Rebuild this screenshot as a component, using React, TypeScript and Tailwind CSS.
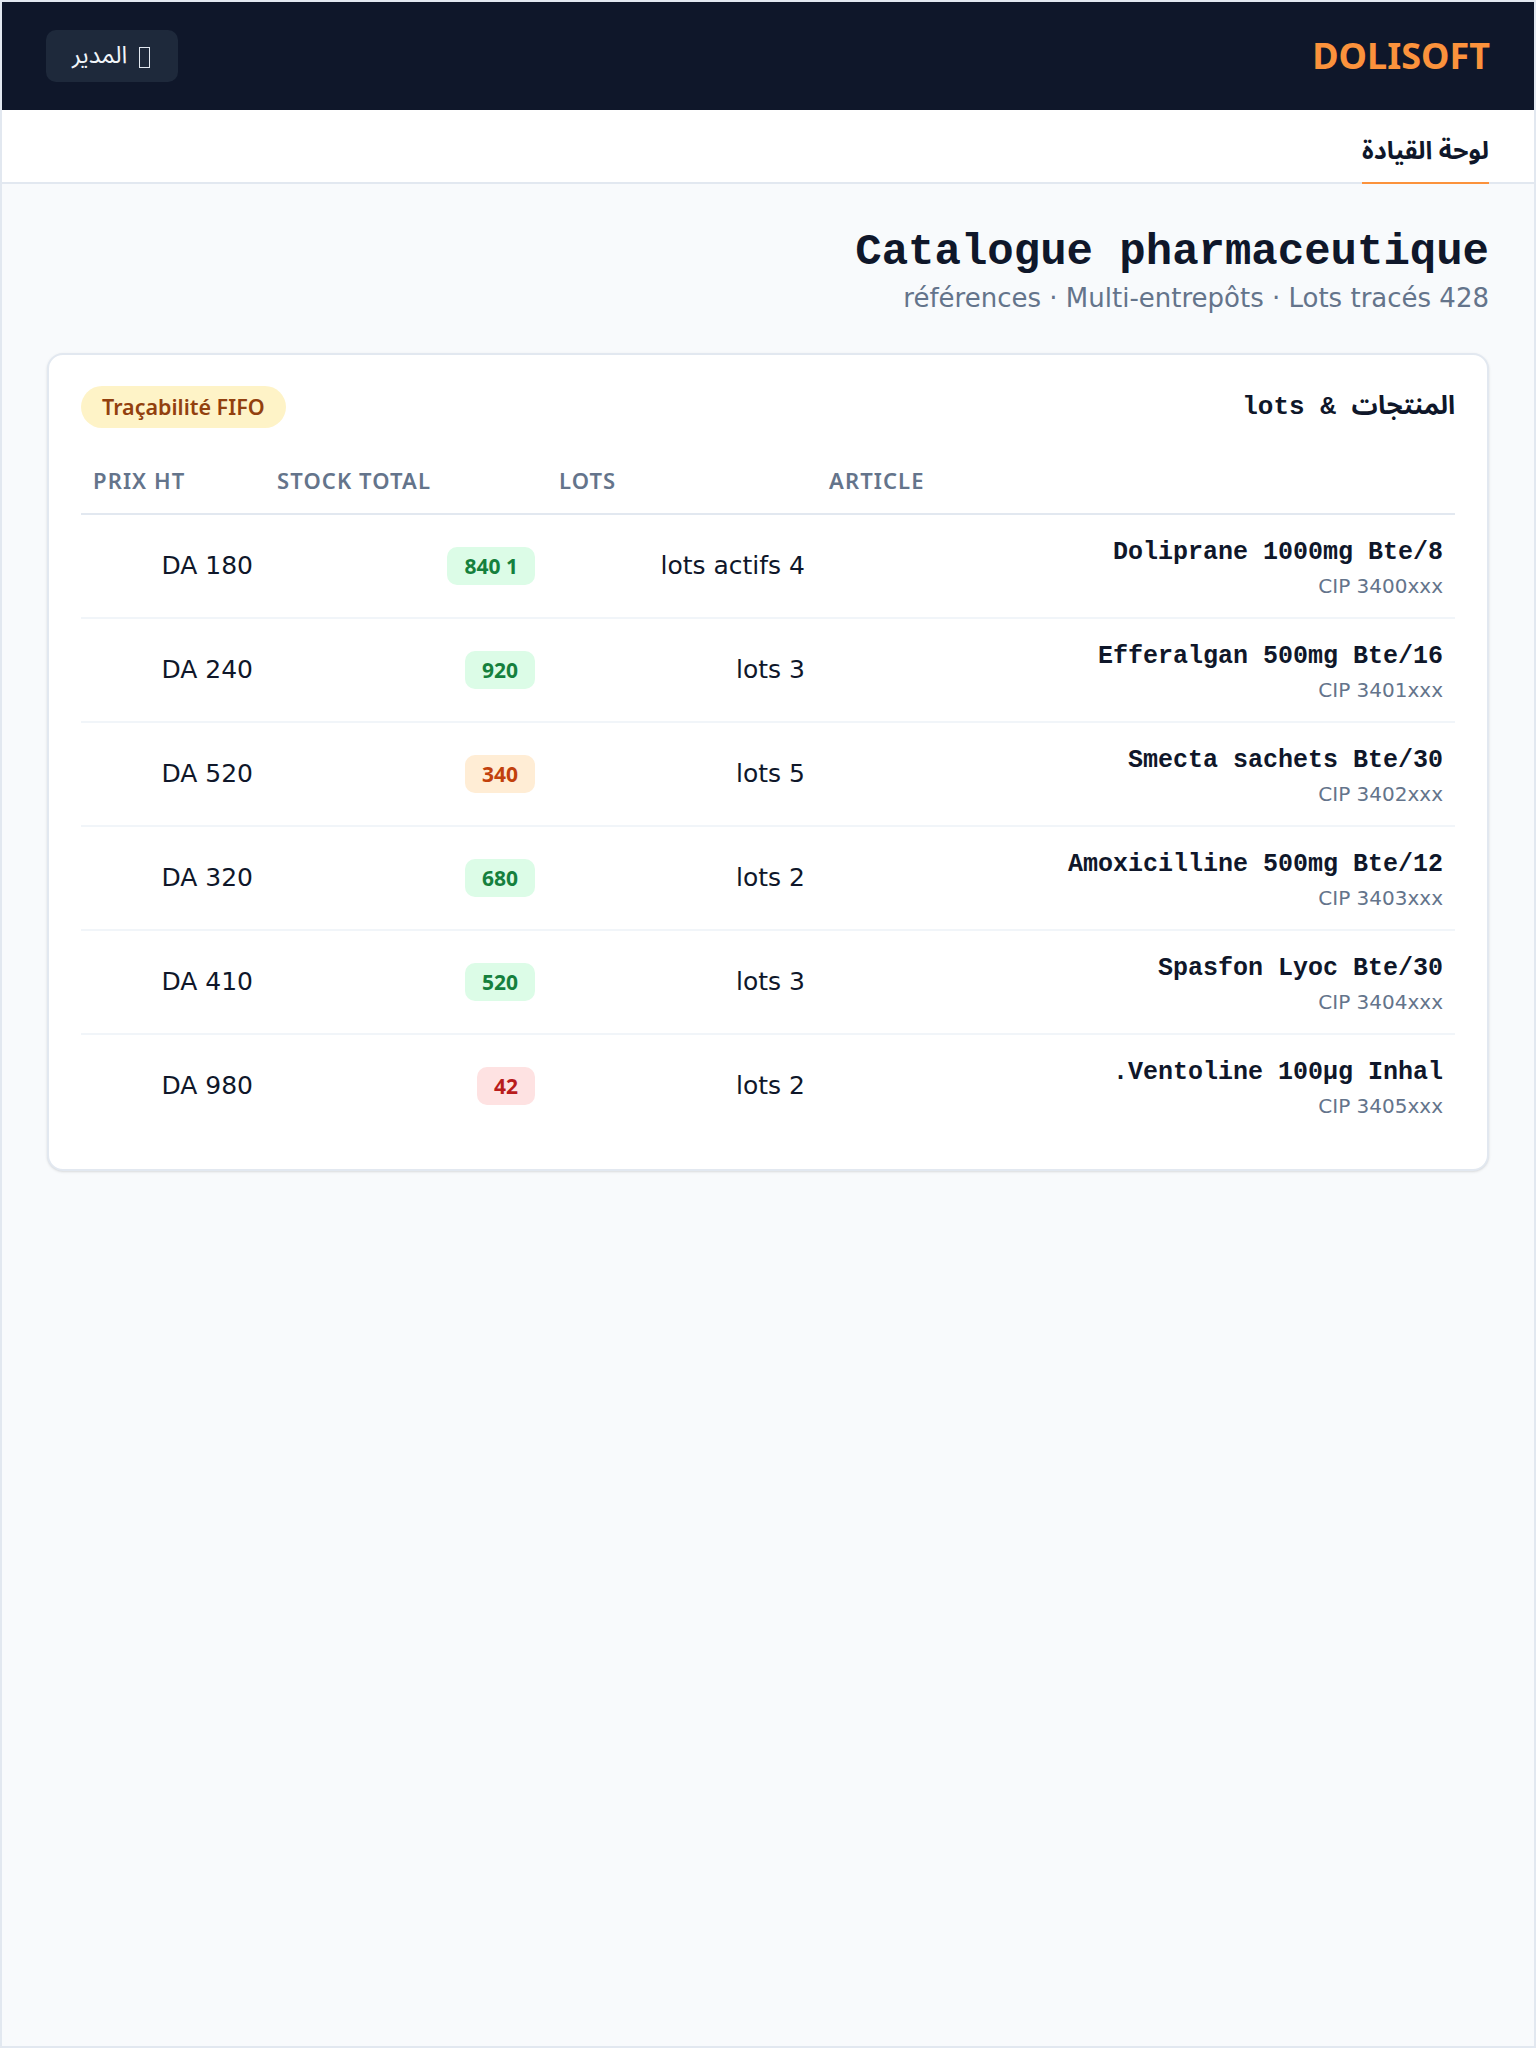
const products = [
  { name: 'Doliprane 1000mg Bte/8', cip: 'CIP 3400xxx', lots: '4 lots actifs', stock: '1 840', level: 'ok', price: '180 DA' },
  { name: 'Efferalgan 500mg Bte/16', cip: 'CIP 3401xxx', lots: '3 lots', stock: '920', level: 'ok', price: '240 DA' },
  { name: 'Smecta sachets Bte/30', cip: 'CIP 3402xxx', lots: '5 lots', stock: '340', level: 'low', price: '520 DA' },
  { name: 'Amoxicilline 500mg Bte/12', cip: 'CIP 3403xxx', lots: '2 lots', stock: '680', level: 'ok', price: '320 DA' },
  { name: 'Spasfon Lyoc Bte/30', cip: 'CIP 3404xxx', lots: '3 lots', stock: '520', level: 'ok', price: '410 DA' },
  { name: 'Ventoline 100µg Inhal.', cip: 'CIP 3405xxx', lots: '2 lots', stock: '42', level: 'critical', price: '980 DA' },
];

const stockStyles: Record<string, string> = {
  ok: 'bg-[#dcfce7] text-[#15803d]',
  low: 'bg-[#ffedd5] text-[#c2410c]',
  critical: 'bg-[#fee2e2] text-[#b91c1c]',
};

export default function App() {
  return (
    <div
      dir="rtl"
      className="h-[2048px] border-2 border-[#e2e8f0] bg-[#f8fafc] font-['DejaVu_Sans',sans-serif] text-[#0f172a]"
    >
      {/* Top bar */}
      <header className="h-[108px] bg-[#0f172a] px-[44px] flex items-center justify-between">
        <div className="font-['Noto_Sans','DejaVu_Sans',sans-serif] text-[36px] font-bold text-[#fb923c] leading-none">
          DOLISOFT
        </div>
        <button className="h-[52px] pl-[26px] pr-[28px] flex items-center gap-[12px] rounded-[10px] bg-[#1e293b] text-[24px] text-[#f1f5f9]">
          {/* missing-glyph box, as in the original */}
          <span className="inline-block w-[11px] h-[21px] border border-[#e2e8f0] mt-[2px]" />
          <span className="font-['Noto_Sans_Arabic','DejaVu_Sans',sans-serif]">المدير</span>
        </button>
      </header>

      {/* Tabs */}
      <nav className="h-[74px] bg-white border-b-2 border-[#e2e8f0] px-[45px] flex">
        <a className="flex items-center pt-[12px] border-b-2 border-[#fb923c] -mb-[2px] font-['Noto_Sans_Arabic','DejaVu_Sans',sans-serif] text-[25px] font-bold text-[#0f172a]">
          لوحة القيادة
        </a>
      </nav>

      <main className="px-[45px] pt-[44px]">
        <h1 className="font-['Liberation_Mono','DejaVu_Sans',monospace] font-bold text-[44px] leading-[48px] text-[#0f172a]">
          Catalogue pharmaceutique
        </h1>
        <p className="mt-[4px] text-[26px] leading-[36px] text-[#64748b]">
          428 références · Multi-entrepôts · Lots tracés
        </p>

        <section className="mt-[37px] bg-white border-2 border-[#e2e8f0] rounded-2xl px-8 pt-[31px] pb-8 shadow-sm">
          <div className="flex items-center justify-between mb-6">
            <h2 className="font-['Liberation_Mono','Noto_Sans_Arabic','DejaVu_Sans',monospace] font-bold text-[26px] leading-[36px]">
              المنتجات & lots
            </h2>
            <span className="h-[42px] px-[21px] flex items-center rounded-full bg-[#fef3c7] text-[#92400e] font-['Noto_Sans',sans-serif] font-semibold text-[21.5px]">
              Traçabilité FIFO
            </span>
          </div>

          <table className="w-full table-fixed border-collapse">
            <thead>
              <tr className="border-b-2 border-[#e2e8f0]">
                {[
                  ['Article', 'w-[638px]'],
                  ['Lots', 'w-[270px]'],
                  ['Stock total', 'w-[282px]'],
                  ['Prix HT', 'w-[184px]'],
                ].map(([label, w]) => (
                  <th
                    key={label}
                    className={`${w} px-3 pt-3 pb-4 text-left font-['Noto_Sans',sans-serif] font-semibold uppercase tracking-[0.05em] text-[22px] leading-[33px] text-[#64748b]`}
                  >
                    {label}
                  </th>
                ))}
              </tr>
            </thead>
            <tbody>
              {products.map((p, i) => (
                <tr key={p.name} className={i < products.length - 1 ? 'border-b-2 border-[#f1f5f9]' : ''}>
                  <td className="px-3 pt-[19px] pb-[16px] text-right align-middle">
                    <div className="font-['Liberation_Mono',monospace] font-bold text-[25px] leading-[37px]">{p.name}</div>
                    <div className="text-[20px] leading-[30px] text-[#64748b]">{p.cip}</div>
                  </td>
                  <td className="px-3 text-right align-middle text-[25px]">{p.lots}</td>
                  <td className="px-3 text-right align-middle">
                    <span
                      className={`inline-block rounded-[10px] px-[17px] py-1 font-['Noto_Sans',sans-serif] font-bold text-[21px] leading-[30px] ${stockStyles[p.level]}`}
                    >
                      {p.stock}
                    </span>
                  </td>
                  <td className="px-3 text-right align-middle text-[25px]">{p.price}</td>
                </tr>
              ))}
            </tbody>
          </table>
        </section>
      </main>
    </div>
  );
}
